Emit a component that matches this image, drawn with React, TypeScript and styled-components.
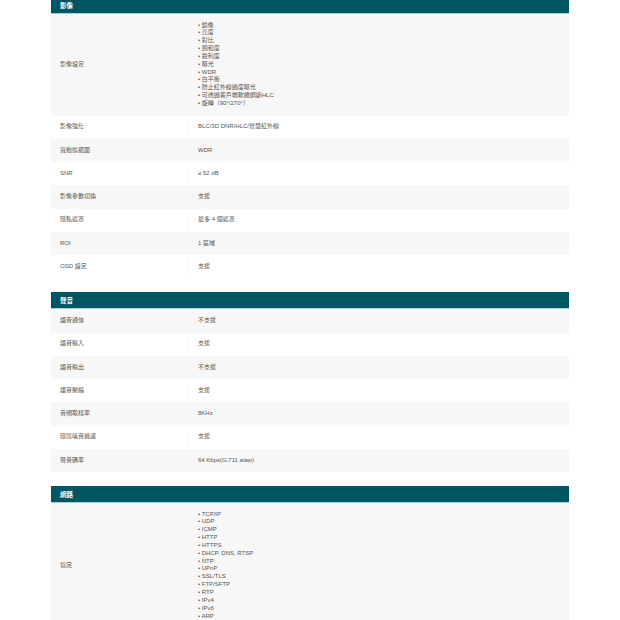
import { createGlobalStyle } from "styled-components";
import styled from "styled-components";

const GlobalStyle = createGlobalStyle`
  html, body {
    margin: 0;
    padding: 0;
    background: #fff;
    height: 620px;
    overflow: hidden;
  }
`;

// the shot starts a little way into the first heading
const Page = styled.div`
  width: 518px;
  margin: -3px 0 0 51px;
  font-family: "Liberation Sans", "Noto Sans CJK TC", sans-serif;
  font-size: 6px;
  line-height: 7.85px;
  color: #555;
`;

const Section = styled.section`
  margin-bottom: 14px;
`;

const Heading = styled.div`
  height: 16px;
  padding-left: 9px;
  background: #005662;
  border-bottom: 1px solid #a9d0d4;
  color: #fff;
  font-size: 6.5px;
  font-weight: bold;
  line-height: 17px;
`;

const Row = styled.div`
  display: grid;
  grid-template-columns: 137px 1fr;
  min-height: 23.25px;
  &:nth-child(odd) {
    background: #f7f7f7;
  }
`;

const Label = styled.div`
  display: flex;
  align-items: center;
  padding-left: 9px;
`;

const Value = styled.div`
  display: flex;
  align-items: center;
  padding-left: 9px;
  border-left: 1px solid #fafafa;
`;

const List = styled.ul`
  margin: 0;
  padding: 7.5px 0 7.8px;
  list-style: none;
`;

const Item = styled.li`
  &::before {
    content: "• ";
  }
`;

type Spec = { label: string; value?: string; items?: string[] };

const sections: { title: string; rows: Spec[] }[] = [
  {
    title: "影像",
    rows: [
      {
        label: "影像設定",
        items: ["鏡像", "亮度", "對比", "飽和度", "銳利度", "曝光", "WDR", "白平衡", "防止紅外線過度曝光", "可透過客戶端軟體調節HLC", "旋轉（90°/270°）"],
      },
      { label: "影像強化", value: "BLC/3D DNR/HLC/智慧紅外線" },
      { label: "寬動態範圍", value: "WDR" },
      { label: "SNR", value: "≥ 52 dB" },
      { label: "影像參數切換", value: "支援" },
      { label: "隱私遮罩", value: "最多 4 個遮罩" },
      { label: "ROI", value: "1 區域" },
      { label: "OSD 設定", value: "支援" },
    ],
  },
  {
    title: "聲音",
    rows: [
      { label: "語音通信", value: "不支援" },
      { label: "語音輸入", value: "支援" },
      { label: "語音輸出", value: "不支援" },
      { label: "語音壓縮", value: "支援" },
      { label: "音頻取樣率", value: "8KHz" },
      { label: "環境噪音過濾", value: "支援" },
      { label: "聲音碼率", value: "64 Kbps(G.711 alaw)" },
    ],
  },
  {
    title: "網路",
    rows: [
      {
        label: "協定",
        items: ["TCP/IP", "UDP", "ICMP", "HTTP", "HTTPS", "DHCP, DNS, RTSP", "NTP", "UPnP", "SSL/TLS", "FTP/SFTP", "RTP", "IPv4", "IPv6", "ARP"],
      },
    ],
  },
];

export default function App() {
  return (
    <Page>
      <GlobalStyle />
      {sections.map((section) => (
        <Section key={section.title}>
          <Heading>{section.title}</Heading>
          <div>
            {section.rows.map((row) => (
              <Row key={row.label}>
                <Label>{row.label}</Label>
                <Value>
                  {row.items ? (
                    <List>
                      {row.items.map((item) => (
                        <Item key={item}>{item}</Item>
                      ))}
                    </List>
                  ) : (
                    row.value
                  )}
                </Value>
              </Row>
            ))}
          </div>
        </Section>
      ))}
    </Page>
  );
}
